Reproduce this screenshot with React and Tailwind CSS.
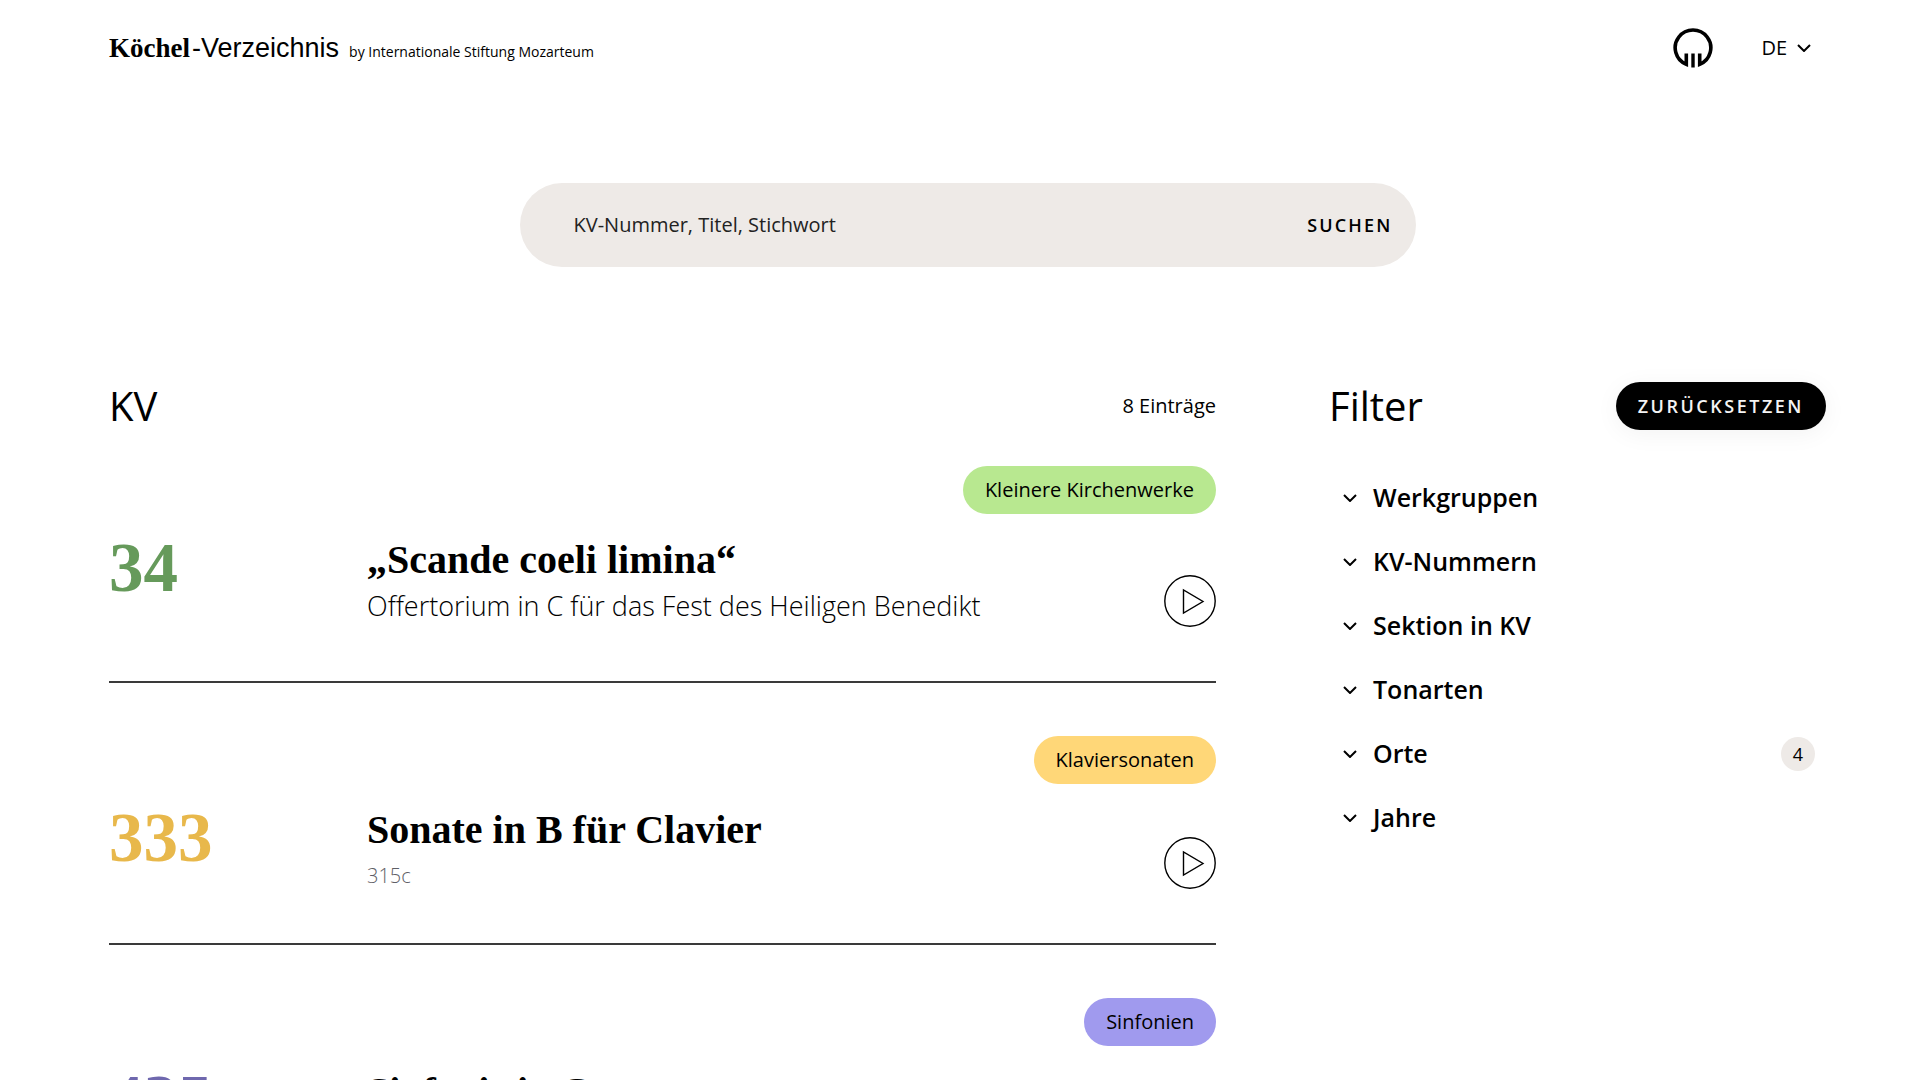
import React from "react";

const entries = [
  {
    number: "34",
    title: "„Scande coeli limina“",
    subtitle: "Offertorium in C für das Fest des Heiligen Benedikt",
    group: "Kleinere Kirchenwerke",
    numberClass: "text-[#669a5b]",
    tagClass: "bg-[#b8e890]",
  },
  {
    number: "333",
    title: "Sonate in B für Clavier",
    former: "315c",
    group: "Klaviersonaten",
    numberClass: "text-[#e8b84b]",
    tagClass: "bg-[#ffd778]",
  },
  {
    number: "425",
    title: "Sinfonie in C",
    group: "Sinfonien",
    numberClass: "text-[#6f68ae]",
    tagClass: "bg-[#a09aee]",
  },
];

const filters = [
  { label: "Werkgruppen" },
  { label: "KV-Nummern" },
  { label: "Sektion in KV" },
  { label: "Tonarten" },
  { label: "Orte", count: 4 },
  { label: "Jahre" },
];

function Chevron() {
  return (
    <svg width="14" height="8" viewBox="0 0 14 8" fill="none" stroke="currentColor" strokeWidth="2" aria-hidden="true">
      <path d="M1 1l6 6 6-6" />
    </svg>
  );
}

function MozarteumMark() {
  return (
    <svg width="40" height="40" viewBox="0 0 40 40" fill="none" stroke="currentColor" aria-hidden="true">
      <path strokeWidth="3.6" d="M13.3 25.5v10.8A17.8 17.8 0 1 1 26.7 36.3V25.5" />
      <path strokeWidth="3.4" d="M20 25.5v14" />
    </svg>
  );
}

function PlayIcon() {
  return (
    <svg width="52" height="52" viewBox="0 0 52 52" fill="none" stroke="currentColor" strokeWidth="1.4" aria-hidden="true">
      <circle cx="26" cy="26" r="25.2" />
      <path d="M19.5 15v23L39 26.5z" />
    </svg>
  );
}

function Entry({ number, title, subtitle, former, group, numberClass, tagClass }) {
  return (
    <article className="mb-[53px] border-b-2 border-[#3a3a3a] pb-[54px]">
      <div className="flex justify-end">
        <a href="#gruppe" className={`rounded-full px-[22px] py-[10px] text-xl leading-7 font-medium ${tagClass}`}>
          {group}
        </a>
      </div>
      <div className="mt-[22px] flex min-h-[83px]">
        <div className={`w-[258px] shrink-0 font-['Liberation_Serif',serif] text-[69px] leading-[64px] font-bold ${numberClass}`}>
          {number}
        </div>
        <div className="min-w-0 grow">
          <h2 className="font-['Liberation_Serif',serif] text-[40px] leading-[48px] font-bold">
            <a href="#werk">{title}</a>
          </h2>
          {subtitle && <p className="text-[27px] leading-[43px] font-light">{subtitle}</p>}
          {former && <p className="pt-[9px] text-xl leading-[26px] font-light text-[#5e5e66]">{former}</p>}
        </div>
        <button type="button" aria-label={`${title} abspielen`} className="shrink-0 self-end">
          <PlayIcon />
        </button>
      </div>
    </article>
  );
}

export default function App() {
  return (
    <div className="h-screen overflow-hidden bg-white pr-[94px] pl-[109px] font-['Open_Sans',sans-serif] text-black">
      <header className="flex h-24 items-center justify-between pr-[15px]">
        <a href="#start" className="flex items-baseline">
          <span className="font-['Liberation_Serif',serif] text-[27px] font-bold">Köchel</span>
          <span className="ml-[2px] font-['Liberation_Sans',sans-serif] text-[27px]">-Verzeichnis</span>
          <span className="ml-[10px] text-sm">by Internationale Stiftung Mozarteum</span>
        </a>
        <div className="flex items-center gap-12">
          <a href="#mozarteum" aria-label="Internationale Stiftung Mozarteum">
            <MozarteumMark />
          </a>
          <button type="button" className="flex items-center gap-[10px] text-xl">
            DE
            <Chevron />
          </button>
        </div>
      </header>

      <main>
        <form className="mx-auto mt-[87px] flex h-[84px] w-full max-w-[896px] items-center rounded-full bg-[#eeeae7] pr-[23px] pl-[54px]">
          <input
            type="search"
            aria-label="KV-Nummer, Titel, Stichwort"
            placeholder="KV-Nummer, Titel, Stichwort"
            className="min-w-0 grow bg-transparent text-xl outline-none placeholder:text-[#222]"
          />
          <button type="submit" className="text-lg font-semibold tracking-[0.12em]">
            SUCHEN
          </button>
        </form>

        <div className="mt-[111px] grid grid-cols-[1107fr_497fr] gap-[113px]">
          <section>
            <div className="mb-8 flex h-[56px] items-center justify-between">
              <h1 className="text-[40px]">KV</h1>
              <p className="text-xl font-medium">8 Einträge</p>
            </div>
            {entries.map((entry) => (
              <Entry key={entry.number} {...entry} />
            ))}
          </section>

          <aside>
            <div className="flex h-[56px] items-center justify-between">
              <h2 className="text-[40px]">Filter</h2>
              <button
                type="button"
                className="h-[48px] rounded-full bg-black px-[22px] text-lg font-semibold tracking-[0.14em] text-[#f4f4f4] shadow-[0_4px_24px_rgba(0,0,0,0.05)]"
              >
                ZURÜCKSETZEN
              </button>
            </div>
            <ul className="mt-8 pr-[11px] pl-[14px]">
              {filters.map(({ label, count }) => (
                <li key={label}>
                  <button type="button" className="flex h-16 w-full items-center text-left text-[25px] font-semibold">
                    <Chevron />
                    <span className="ml-4 grow">{label}</span>
                    {count && (
                      <span className="flex size-[34px] items-center justify-center rounded-full bg-[#eeeae7] text-lg font-normal">
                        {count}
                      </span>
                    )}
                  </button>
                </li>
              ))}
            </ul>
          </aside>
        </div>
      </main>
    </div>
  );
}
